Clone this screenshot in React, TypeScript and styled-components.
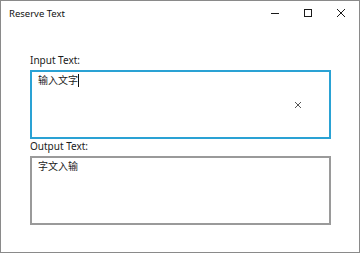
import React from "react";
import styled, { createGlobalStyle } from "styled-components";

const GlobalStyle = createGlobalStyle`
	html, body {
		margin: 0;
		padding: 0;
		background: #ffffff;
	}
	body {
		font-family: "Noto Sans", "Noto Sans CJK SC", sans-serif;
	}
`;

export default function App() {
	return (
		<>
			<GlobalStyle />
			<Window>
				<TitleBar>
					<Title>Reserve Text</Title>
					<Caption>
						<CaptionButton aria-label="minimize">
							<svg width="10" height="10" viewBox="0 0 10 10">
								<path d="M1 5.5h8" stroke="#1a1a1a" strokeWidth="1" />
							</svg>
						</CaptionButton>
						<CaptionButton aria-label="maximize">
							<svg width="10" height="10" viewBox="0 0 10 10">
								<rect x="1.5" y="1.5" width="7" height="7" fill="none" stroke="#1a1a1a" strokeWidth="1" />
							</svg>
						</CaptionButton>
						<CaptionButton aria-label="close">
							<svg width="10" height="10" viewBox="0 0 10 10">
								<path d="M1 1l8 8M9 1l-8 8" stroke="#1a1a1a" strokeWidth="1" />
							</svg>
						</CaptionButton>
					</Caption>
				</TitleBar>

				<Content>
					<Label>Input Text:</Label>
					<TextBox $focused>
						<BoxText>
							输入文字
							<Caret />
						</BoxText>
						<ClearButton aria-label="clear">
							<svg width="8" height="8" viewBox="0 0 8 8">
								<path d="M1 1l6 6M7 1l-6 6" stroke="#555555" strokeWidth="1" />
							</svg>
						</ClearButton>
					</TextBox>

					<Label>Output Text:</Label>
					<TextBox>
						<BoxText>字文入输</BoxText>
					</TextBox>
				</Content>
			</Window>
		</>
	);
}

const Window = styled.div`
	width: 360px;
	height: 253px;
	box-sizing: border-box;
	border: 1px solid #8a8a8a;
	background: #ffffff;
	display: flex;
	flex-direction: column;
`;

const TitleBar = styled.div`
	height: 23px;
	display: flex;
	align-items: center;
	justify-content: space-between;
	padding-left: 8px;
`;

const Title = styled.span`
	font-size: 9.5px;
	color: #111111;
	margin-top: 1px;
`;

const Caption = styled.div`
	display: flex;
	height: 100%;
	margin-right: 2px;
`;

const CaptionButton = styled.div`
	width: 33px;
	height: 100%;
	display: flex;
	align-items: center;
	justify-content: center;
	padding-top: 1px;
	box-sizing: border-box;
`;

const Content = styled.div`
	display: flex;
	flex-direction: column;
	padding: 29px 28px 0 29px;
`;

const Label = styled.div`
	font-size: 10px;
	line-height: 15px;
	color: #1a1a1a;
	margin-bottom: 2px;
`;

const TextBox = styled.div<{ $focused?: boolean }>`
	height: 69px;
	box-sizing: border-box;
	border: 2px solid ${(p) => (p.$focused ? "#2aa2d4" : "#9a9a9a")};
	display: flex;
	align-items: stretch;
`;

const BoxText = styled.div`
	flex: 1;
	padding: 1px 0 0 6px;
	font-family: "Noto Sans CJK SC", sans-serif;
	font-size: 10px;
	line-height: 14px;
	color: #1a1a1a;
	display: flex;
	align-items: flex-start;
`;

const Caret = styled.span`
	display: inline-block;
	width: 0;
	height: 13px;
	border-left: 1px solid #111111;
	margin-top: 1px;
`;

const ClearButton = styled.div`
	width: 28px;
	margin-right: 17px;
	display: flex;
	align-items: center;
	justify-content: center;
`;
